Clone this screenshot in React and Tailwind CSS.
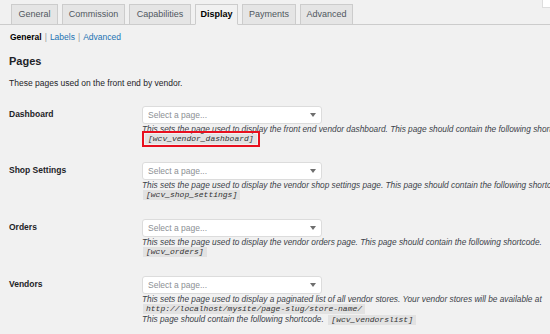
import React from "react";

const tabs = [
  { name: "General", w: "w-[47px]" },
  { name: "Commission", w: "w-[63px]" },
  { name: "Capabilities", w: "w-[62px]" },
  { name: "Display", w: "w-[43px]", active: true },
  { name: "Payments", w: "w-[54px]" },
  { name: "Advanced", w: "w-[53px]" },
];

function Select() {
  return (
    <div className="w-[180px] h-[18px] bg-white border border-[#dcdcdc] rounded-[3px] flex items-center justify-between pl-[5px] pr-[5px]">
      <span className="text-[8.5px] text-[#8c8f94]">Select a page...</span>
      <svg width="6" height="4" viewBox="0 0 6 4">
        <path d="M0 0 L6 0 L3 4 Z" fill="#6e6e6e" />
      </svg>
    </div>
  );
}

function Code({ children }) {
  return (
    <span className="inline-block bg-[#e2e2e2] px-[3px] leading-[10px] text-[8px] italic text-[#333] not-italic-none" style={{ fontFamily: '"Liberation Mono", "DejaVu Sans Mono", monospace' }}>
      {children}
    </span>
  );
}

function Desc({ children }) {
  return <div className="whitespace-nowrap italic text-[8.3px] leading-[10px] text-[#3c434a]">{children}</div>;
}

function CodeLine({ children }) {
  return <div className="pl-[1px] text-[8px] leading-[10px] h-[10px] whitespace-nowrap">{children}</div>;
}

function Row({ label, h, children }) {
  return (
    <div className={`flex ${h}`}>
      <div className="w-[142px] pl-[9px] pt-[3px] text-[8.5px] leading-[10px] font-bold text-[#1d2327] shrink-0">{label}</div>
      <div className="flex flex-col">
        <Select />
        {children}
      </div>
    </div>
  );
}

export default function App() {
  return (
    <div
      className="w-[550px] h-[334px] bg-[#f1f1f1] overflow-hidden relative"
      style={{ fontFamily: '"Liberation Sans", Arial, sans-serif' }}
    >
      <div className="absolute right-0 top-0 w-[8px] h-[8px] bg-white border-l border-b border-[#ddd]" />
      <div className="flex items-end gap-[4px] pl-[11px] h-[25px] border-b border-[#cccccc]">
        {tabs.map((t) => (
          <div
            key={t.name}
            className={`${t.w} h-[21px] -mb-px flex items-center justify-center border border-[#cccccc] text-[9px] ${
              t.active
                ? "bg-[#f1f1f1] border-b-[#f1f1f1] text-black font-bold"
                : "bg-[#e5e5e5] text-[#50575e]"
            }`}
          >
            {t.name}
          </div>
        ))}
      </div>

      <div className="pl-[10px] mt-[7px] text-[8.5px] leading-[10px] flex gap-[3px]">
        <span className="font-bold text-black">General</span>
        <span className="text-[#999]">|</span>
        <span className="text-[#2271b1]">Labels</span>
        <span className="text-[#999]">|</span>
        <span className="text-[#2271b1]">Advanced</span>
      </div>

      <div className="pl-[9px] mt-[12px] text-[11px] leading-[14px] font-semibold text-[#1d2327]">Pages</div>
      <div className="pl-[9px] mt-[10px] text-[8.5px] leading-[10px] text-[#1d2327]">
        These pages used on the front end by vendor.
      </div>

      <div className="mt-[18px] flex flex-col">
        <Row label="Dashboard" h="h-[56px]">
          <Desc>
            This sets the page used to display the front end vendor dashboard. This page should contain the following shortcode.
          </Desc>
          <div className="text-[8px] leading-[10px] -mt-[3px]">
            <span className="inline-block border-2 border-[#e8101e] px-[1px] py-[1px]">
              <Code>[wcv_vendor_dashboard]</Code>
            </span>
          </div>
        </Row>
        <Row label="Shop Settings" h="h-[57px]">
          <Desc>
            This sets the page used to display the vendor shop settings page. This page should contain the following shortcode.
          </Desc>
          <CodeLine>
            <Code>[wcv_shop_settings]</Code>
          </CodeLine>
        </Row>
        <Row label="Orders" h="h-[57px]">
          <Desc>
            This sets the page used to display the vendor orders page. This page should contain the following shortcode.
          </Desc>
          <CodeLine>
            <Code>[wcv_orders]</Code>
          </CodeLine>
        </Row>
        <Row label="Vendors" h="h-[57px]">
          <Desc>
            This sets the page used to display a paginated list of all vendor stores. Your vendor stores will be available at
          </Desc>
          <CodeLine>
            <Code>http://localhost/mysite/page-slug/store-name/</Code>
          </CodeLine>
          <Desc>
            This page should contain the following shortcode.&nbsp; <Code>[wcv_vendorslist]</Code>
          </Desc>
        </Row>
      </div>
    </div>
  );
}
